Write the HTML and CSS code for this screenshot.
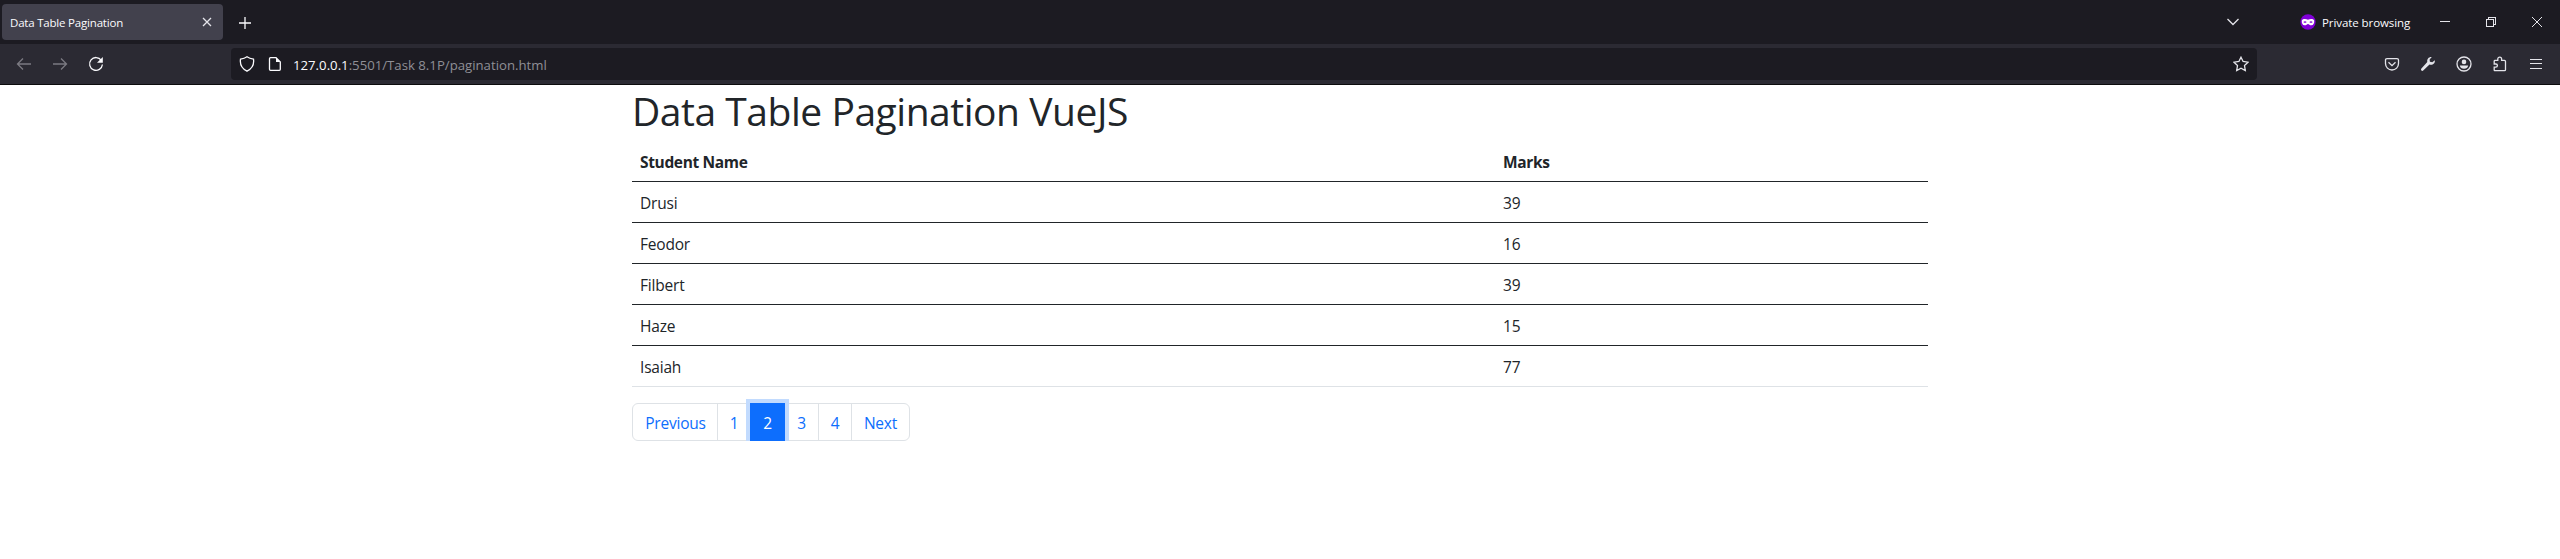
FILE: index.html
```html
<!DOCTYPE html>
<html lang="en">
<head>
<meta charset="utf-8">
<title>Data Table Pagination</title>
<link rel="stylesheet" href="styles.css">
</head>
<body>
<header class="browser">
  <div class="tabbar">
    <div class="tab">
      <span class="tab-title">Data Table Pagination</span>
      <svg class="icon" width="10" height="10" viewBox="0 0 10 10"><path d="M1 1l8 8M9 1l-8 8"/></svg>
    </div>
    <svg class="icon bright new-tab" width="12" height="12" viewBox="0 0 12 12"><path d="M6 0v12M0 6h12"/></svg>
    <div class="window-controls">
      <svg class="icon list-tabs" width="12" height="8" viewBox="0 0 12 8"><path d="M.5 1L6 6.500L11.500 1"/></svg>
      <svg class="mask" width="16" height="16" viewBox="0 0 16 16"><circle cx="8" cy="8" r="7.700" fill="#8000d7"/><path fill="#fff" fill-rule="evenodd" d="M1.800 6.500C3 4.500 6 4.700 8 5.800C10 4.700 13 4.500 14.200 6.500C14.500 9 13.500 11.300 11.300 11.300C9.700 11.300 9 9.900 8 9.900S6.300 11.300 4.700 11.300C2.500 11.300 1.500 9 1.800 6.500zM3.300 8q1.700 1.700 3.400 0q-1.700-1.700-3.400 0zM9.300 8q1.700 1.700 3.400 0q-1.700-1.700-3.400 0z"/></svg>
      <span class="private-label">Private browsing</span>
      <svg class="icon crisp minimize" width="10" height="10" viewBox="0 0 10 10"><path d="M0 4.500h10"/></svg>
      <svg class="icon crisp restore" width="10" height="10" viewBox="0 0 10 10"><path d="M.5 2.500h7v7h-7zM2.500 2.500v-2h7v7h-2"/></svg>
      <svg class="icon thin" width="10" height="10" viewBox="0 0 10 10"><path d="M0 0l10 10M10 0l-10 10"/></svg>
    </div>
  </div>
  <div class="toolbar">
    <div class="nav">
      <svg class="icon dim" width="16" height="16" viewBox="0 0 16 16"><path d="M7 2.500L1.500 8L7 13.500M1.500 8H15"/></svg>
      <svg class="icon dim" width="16" height="16" viewBox="0 0 16 16"><path d="M9 2.500L14.500 8L9 13.500M14.500 8H1"/></svg>
      <svg class="icon bright" width="16" height="16" viewBox="0 0 16 16"><path d="M13.300 4.300A6.400 6.400 0 1 0 14.400 8.500"/><path class="solid" d="M14.800 1v5.800H9z"/></svg>
    </div>
    <div class="urlbar">
      <svg class="icon bright" width="16" height="16" viewBox="0 0 16 16"><path d="M8 .8C10 2.300 12.200 2.900 14.500 3.200C15.200 8 13.500 12.500 8 15.200C2.500 12.500.8 8 1.500 3.200C3.800 2.900 6 2.300 8 .8z"/></svg>
      <svg class="icon bright page-icon" width="16" height="16" viewBox="0 0 16 16"><path d="M3.500 1.700H9L13.300 6v7.300q0 1-1 1h-8.800q-1 0-1-1V2.700q0-1 1-1z"/><path class="solid" d="M9 1.500V6h4.500z"/></svg>
      <span class="url"><b>127.0.0.1</b>:5501/Task 8.1P/pagination.html</span>
      <svg class="icon star" width="16" height="16" viewBox="0 0 16 16"><path d="M8 1.200L10.100 5.500L15 6.200L11.500 9.500L12.300 14.500L8 12.200L3.700 14.500L4.500 9.500L1 6.200L5.900 5.500z"/></svg>
    </div>
    <div class="actions">
      <svg class="icon" width="16" height="16" viewBox="0 0 16 16"><path d="M3 2.600h10q1.500 0 1.500 1.500V7.500a6.500 6.500 0 0 1-13 0V4.100Q1.500 2.600 3 2.600zM4.500 6.300L8 9.600L11.500 6.300"/></svg>
      <svg class="icon" width="16" height="16" viewBox="0 0 16 16"><path class="solid" d="M14.800 4.200L12.300 6.300L9.900 5.700L9.600 3.500L11.800 1.100C9 .7 6.700 3 7.300 6L1.200 12.800C.4 14.400 2.200 15.400 3.200 14.600L9.500 8.500C12.500 9.300 15.400 7.500 14.800 4.200z"/></svg>
      <svg class="icon shifted" width="16" height="16" viewBox="0 0 16 16"><circle cx="8" cy="8" r="7"/><circle class="solid" cx="8" cy="5.900" r="2.300"/><path class="solid" d="M3.800 9.500h8.400Q11.500 12.700 8 12.800Q4.500 12.700 3.800 9.500z"/></svg>
      <svg class="icon" width="16" height="16" viewBox="0 0 16 16"><path d="M2.200 8V5.200q0-.8.8-.8h2.800V3a1.900 1.900 0 0 1 3.800 0v1.400h2.900q1 0 1 1v8.300q0 1-1 1H3q-.8 0-.8-.8v-2.700h1.600a1.600 1.600 0 0 0 0-3.200z"/></svg>
      <svg class="icon crisp" width="16" height="16" viewBox="0 0 16 16"><path d="M2 3.500h12M2 7.500h12M2 12.500h12"/></svg>
    </div>
  </div>
</header>
<main class="container">
  <h1 class="title"><span>Data Table Pagination VueJS</span></h1>
  <table class="table">
    <thead><tr><th class="name-col">Student Name</th><th>Marks</th></tr></thead>
    <tbody>
      <tr><td>Drusi</td><td>39</td></tr>
      <tr><td>Feodor</td><td>16</td></tr>
      <tr><td>Filbert</td><td>39</td></tr>
      <tr><td>Haze</td><td>15</td></tr>
      <tr><td>Isaiah</td><td>77</td></tr>
    </tbody>
  </table>
  <ul class="pagination">
    <li class="page wide">Previous</li>
    <li class="page">1</li>
    <li class="page active">2</li>
    <li class="page third">3</li>
    <li class="page">4</li>
    <li class="page last">Next</li>
  </ul>
</main>
</body>
</html>
```
FILE: styles.css
```css
* { box-sizing: border-box; }
body {
  margin: 0;
  background: #fff;
  color: #212529;
  font: 15.5px/24px "Open Sans", "Noto Sans", sans-serif;
  letter-spacing: -0.2px;
}
.browser { color: #fbfbfe; border-bottom: 1px solid #0c0c0d; }
.tabbar { display: flex; align-items: center; height: 44px; padding-left: 2px; background: #1c1b22; }
.tab {
  display: flex; align-items: center; justify-content: space-between;
  width: 221px; height: 36px; padding: 0 11px 0 8px;
  border-radius: 4px; background: #42414d;
}
.tab-title, .private-label { font-size: 11.5px; line-height: 16px; white-space: nowrap; letter-spacing: -0.2px; }
.tab-title { padding-top: 2px; }
.icon { display: block; flex: none; fill: none; stroke: #e4e4ea; stroke-width: 1.3; }
.bright { stroke: #fbfbfe; }
.bright .solid { fill: #fbfbfe; }
.solid { fill: #e4e4ea; stroke: none; }
.dim { stroke: #7b7a82; }
.crisp { shape-rendering: crispEdges; stroke-width: 1; }
.thin { stroke-width: 1; }
.new-tab { margin: 1px 0 0 16px; }
.window-controls { display: flex; align-items: center; margin-left: auto; padding-right: 18px; }
.list-tabs { margin-right: 61px; }
.mask { margin-right: 6px; }
.private-label { width: 88px; padding-top: 2px; letter-spacing: -0.08px; }
.minimize { margin-left: 30px; }
.restore { margin: 0 36px; }
.toolbar { display: flex; align-items: center; height: 40px; background: #2b2a33; }
.nav { display: flex; gap: 20px; width: 231px; padding-left: 16px; }
.urlbar {
  display: flex; align-items: center; width: 2026px; height: 32px;
  padding: 0 8px; border-radius: 4px; background: #1c1b22;
}
.page-icon { margin-left: 12px; }
.url { margin-left: 10px; padding-top: 2px; color: #8f8f96; font-size: 13.2px; line-height: 20px; letter-spacing: 0; }
.url b { color: #fbfbfe; font-weight: 400; }
.star { margin-left: auto; }
.actions { display: flex; gap: 20px; margin-left: auto; padding-right: 16px; }

.container { width: 1296px; margin: 0 auto; }
.title { height: 48px; margin: 0 0 8px; padding-top: 2px; font-size: 39px; line-height: 48px; font-weight: 400; letter-spacing: -0.47px; }
.table { width: 100%; margin-bottom: 16px; border-collapse: separate; border-spacing: 0; table-layout: fixed; }
.name-col { width: 863px; }
th, td { height: 41px; padding: 9px 8px 7px; border-bottom: 1px solid #212529; text-align: left; }
th { font-weight: 700; letter-spacing: -0.35px; }
tbody tr:last-child td { border-bottom-color: #dee2e6; }
.pagination {
  display: flex; width: 278px; height: 38px; margin: 0; padding: 0;
  list-style: none; border: 1px solid #dee2e6; border-radius: 6px; color: #0d6efd;
}
.page { display: flex; align-items: center; justify-content: center; width: 33px; padding-top: 2px; border-right: 1px solid #dee2e6; }
.wide { width: 85px; padding-left: 1px; }
.third { width: 34px; }
.active {
  position: relative; width: 35px; margin: -1px 0 -1px -1px;
  border: 0; background: #0d6efd; color: #fff; box-shadow: 0 0 0 4px #c2dbfe;
}
.last { flex: 1; border-right: 0; }
```
